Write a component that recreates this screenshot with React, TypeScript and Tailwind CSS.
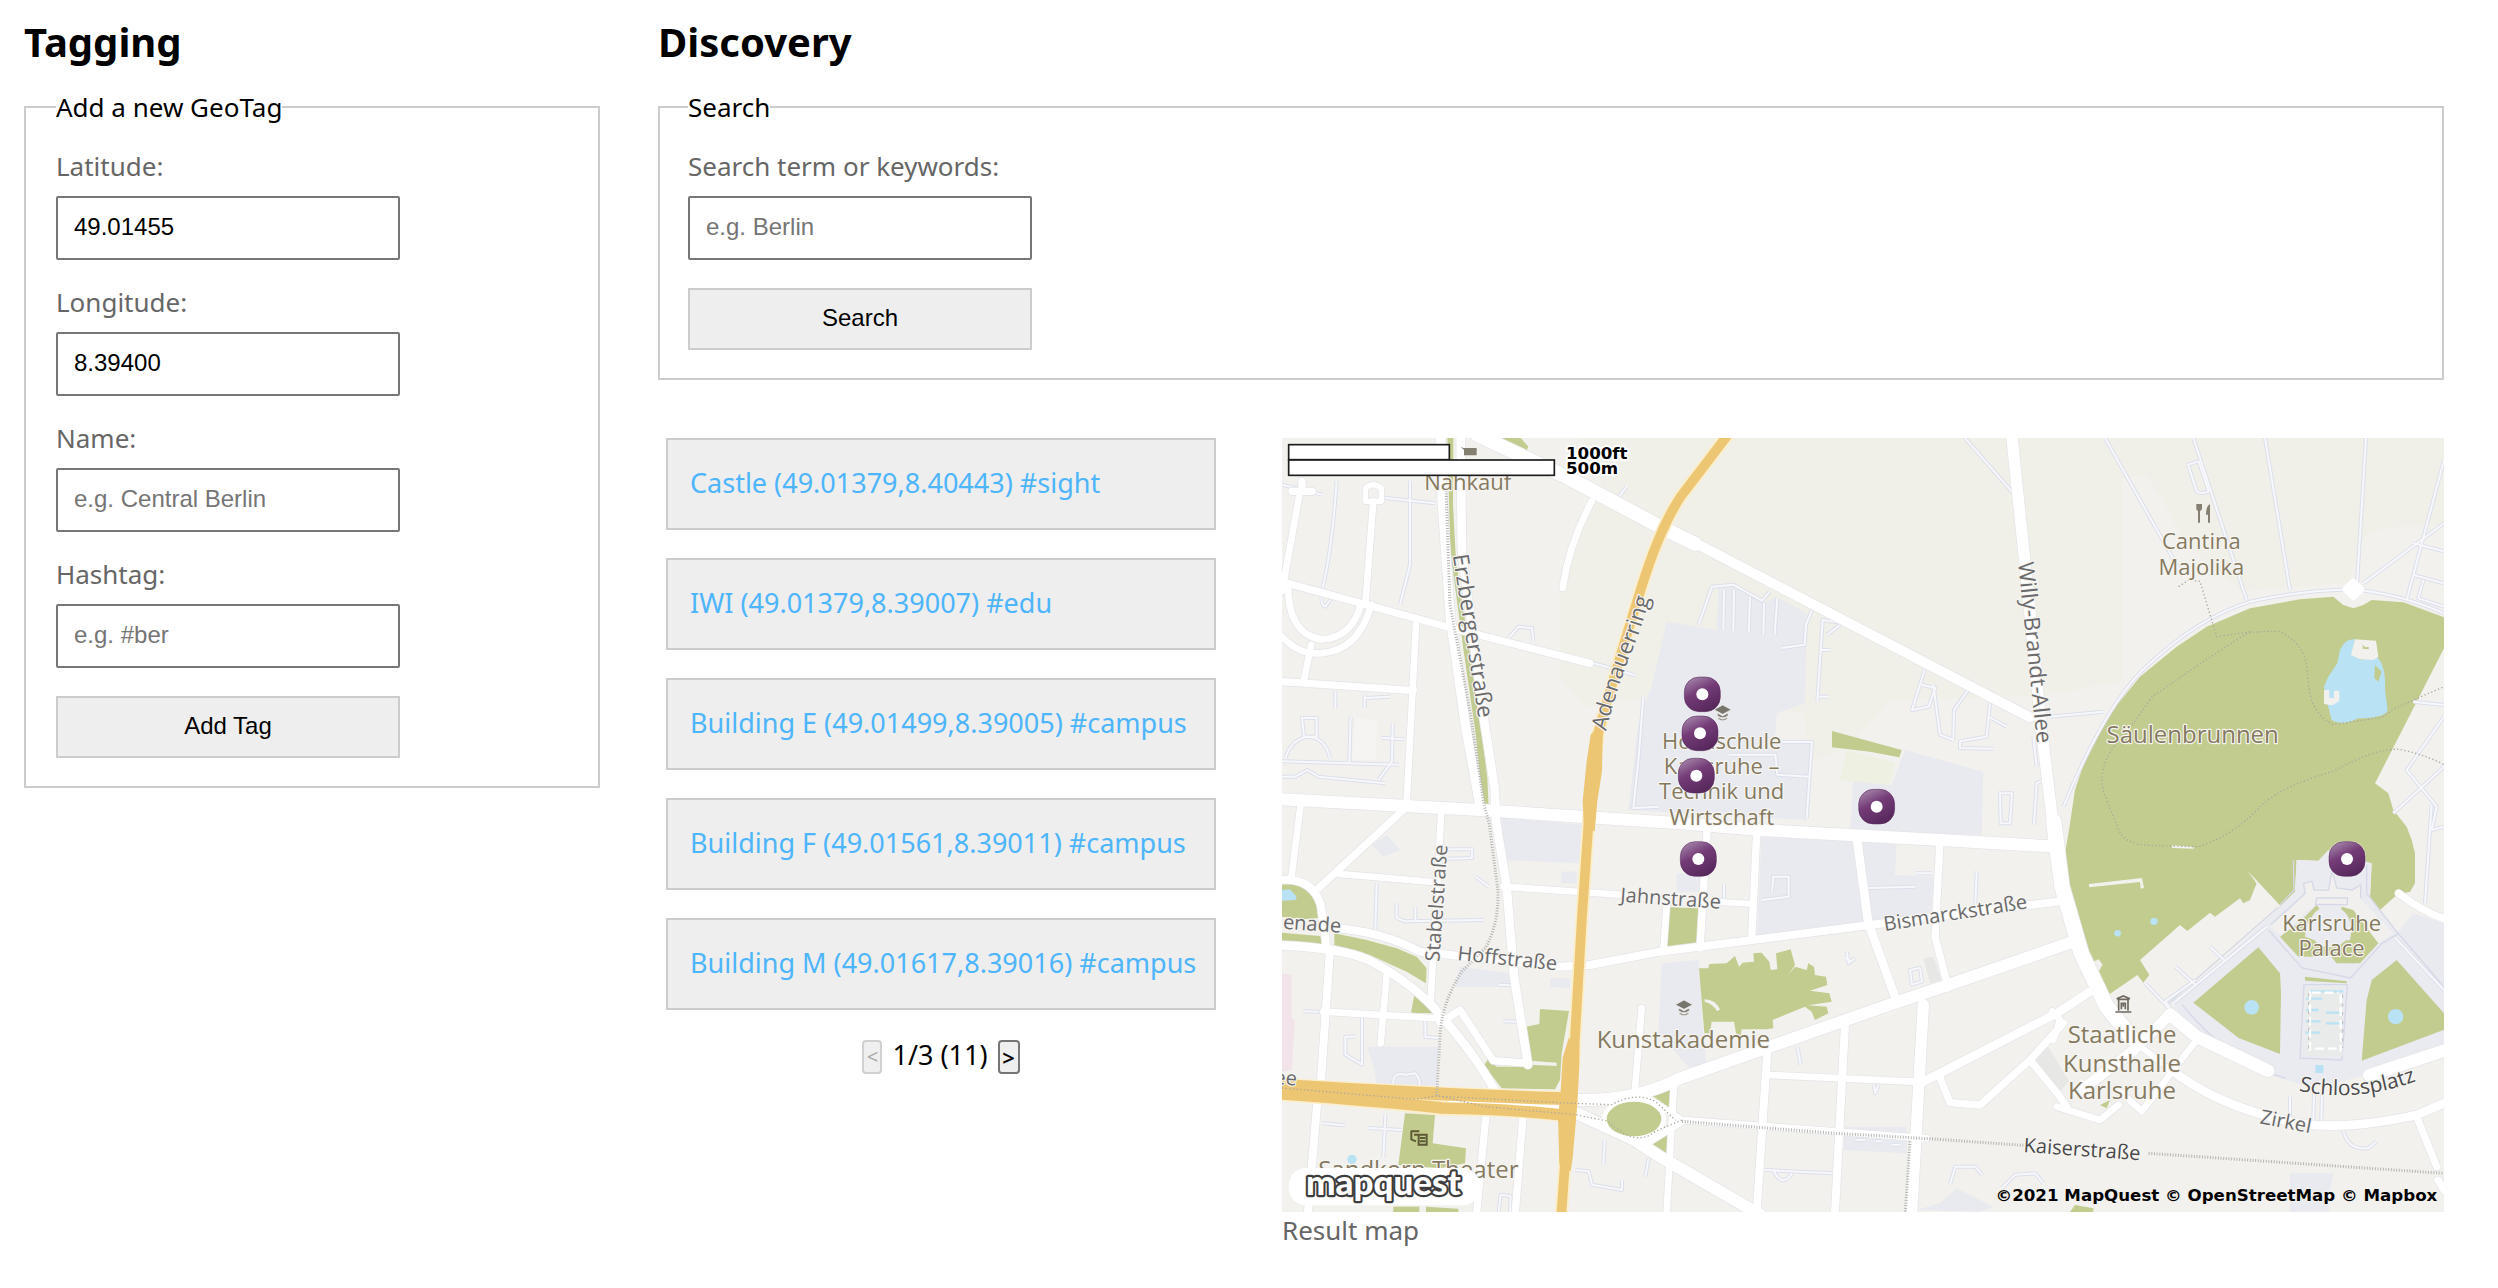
import type { ReactNode } from "react";

const results = [
  "Castle (49.01379,8.40443) #sight",
  "IWI (49.01379,8.39007) #edu",
  "Building E (49.01499,8.39005) #campus",
  "Building F (49.01561,8.39011) #campus",
  "Building M (49.01617,8.39016) #campus",
];

/* ---------- map data (three map units per CSS pixel) ---------- */

const blocks = [
  "1154,551 1304,576 1309,446 1354,436 1454,491 1484,476 1574,526 1569,796 1484,826 1479,906 1589,906 1574,1146 1039,1116 1069,856 1110,740",
  "1869,936 2104,1001 2099,1190 1704,1180 1714,1026 1829,1041",
  "1439,1191 1719,1201 1759,1461 1424,1496",
  "1739,1206 1844,1216 1839,1311 1954,1316 1949,1431 1764,1451",
  "620,1130 904,1161 894,1276 654,1266",
  "314,1191 354,1236 304,1256 269,1221",
  "839,1301 884,1301 884,1336 839,1336",
  "534,1586 684,1606 694,1646 519,1646",
  "804,1621 864,1621 864,1651 804,1646",
  "1139,1576 1249,1566 1264,1786 1274,1886 1219,1886 1129,1786",
  "254,1826 469,1826 464,1946 284,1936 274,1881",
  "1184,1306 1254,1306 1254,1361 1184,1361",
  "1689,2066 1874,2066 1874,2146 1684,2136",
  "2024,2251 2134,2306 2094,2322 1904,2316 1974,2296",
  "3394,1426 3486,1456 3486,1656 3344,1486",
  "3024,2206 3154,2206 3140,2290 3140,2322 3024,2322",
];

const greens = [
  "2361,1176 2379,1056 2419,936 2484,826 2574,716 2684,626 2774,566 2904,511 3054,484 3154,476 3184,501 3214,511 3244,501 3269,486 3364,493 3486,538 3486,631 3279,1036 3319,1066 3334,1116 3374,1166 3389,1206 3399,1246 3399,1336 3384,1361 3344,1371 3294,1416 3264,1376 3269,1276 3044,1266 3039,1361 2994,1406 2924,1336 2904,1386 2884,1396 2874,1381 2799,1436 2784,1424 2716,1479 2694,1461 2574,1566 2602,1611 2584,1634 2566,1611 2479,1671 2434,1576 2394,1476 2354,1326 2349,1246",
  "634,0 716,0 739,26 729,46",
  "496,0 514,0 513,200 522,370 560,620 594,846 616,1020 620,1106 604,1106 580,880 545,640 505,340",
  "0,1336 30,1334 70,1344 100,1380 110,1440 60,1444 0,1436",
  "0,1484 139,1496 144,1524 0,1508",
  "157,1486 254,1506 344,1531 404,1556 434,1591 432,1636 374,1601 264,1551 157,1521",
  "397,1671 459,1726 387,1724",
  "774,1713 861,1719 839,1846 834,1926 819,1954 659,1951 606,1881 619,1864 644,1886 739,1886 732,1766 772,1758",
  "369,2026 459,2031 452,2116 552,2131 549,2176 474,2191 349,2181",
  "334,2306 412,2306 412,2322 334,2322",
  "432,2306 529,2312 529,2322 432,2322",
  "1104,1968 1169,1949 1169,2014",
  "1092,2121 1162,2081 1157,2151",
  "1164,1408 1249,1411 1244,1521 1152,1531",
  "1251,1591 1279,1591 1282,1578 1334,1576 1359,1554 1371,1586 1382,1574 1416,1571 1414,1546 1439,1544 1462,1571 1466,1596 1486,1594 1482,1546 1526,1534 1539,1581 1519,1611 1539,1586 1574,1596 1579,1576 1596,1586 1599,1611 1632,1616 1636,1641 1584,1658 1642,1666 1649,1691 1578,1702 1634,1706 1639,1726 1599,1746 1589,1721 1569,1706 1472,1746 1474,1771 1452,1774 1379,1774 1374,1811 1362,1786 1356,1751 1289,1751 1284,1786 1267,1786",
  "1650,879 1859,936 1852,958 1764,941 1650,928",
  "2364,2322 2379,2301 2434,2311 2434,2322",
  "2454,2001 2484,1986 2474,2011",
];

const palaceGreens = [
  "2734,1694 2929,1528 2994,1606 2997,1666 2994,1848 2870,1800",
  "3269,1626 3344,1566 3486,1726 3486,1775 3239,1868 3254,1686",
  "2994,1496 3049,1456 3104,1401 3119,1421 3074,1456 3069,1496 3124,1516 3204,1506 3209,1476 3174,1436 3179,1406 3214,1416 3289,1516 3234,1576 3164,1576 3144,1551 3104,1556 3049,1556",
  "3069,1616 3194,1630 3194,1636 3069,1628",
];

const roads: [string, number][] = [
  ["M476,0 L480,180 505,540 550,860 596,1116", 28],
  ["M536,0 L540,350 574,600 605,840 638,1050 642,1150 674,1346 696,1616 738,1880", 26],
  ["M585,-10 L860,120 1134,266 1240,318", 42],
  ["M1200,296 L1264,328 2244,838", 30],
  ["M2189,-10 L2229,376 2274,836 2315,1176", 34],
  ["M2315,1150 L2340,1346 2398,1546 2474,1706 2550,1800", 46],
  ["M0,1084 L594,1116 1194,1156 1434,1176 1974,1206 2324,1226", 36],
  ["M54,160 L0,460", 20],
  ["M274,190 L250,500", 20],
  ["M250,190 L250,150 Q274,130 298,150 L298,190 Z", 16],
  ["M30,160 L90,160 M60,130 L60,160", 22],
  ["M0,431 L494,566 924,676", 22],
  ["M18,440 Q18,590 120,604 Q210,600 236,500", 20],
  ["M0,596 Q50,650 114,646 Q230,640 268,500", 20],
  ["M88,620 L66,726", 20],
  ["M0,731 L394,758", 22],
  ["M402,560 L374,1096", 20],
  ["M929,190 Q860,320 842,450", 20],
  ["M56,1100 L28,1320", 20],
  ["M370,1110 L110,1350", 22],
  ["M174,1308 L454,1332", 20],
  ["M0,1326 Q90,1320 116,1400 L134,1530 144,1536 116,1940", 24],
  ["M0,1522 Q180,1530 260,1566 Q400,1640 474,1730 Q580,1850 640,1960", 26],
  ["M154,1470 Q300,1480 414,1541 L830,1586 924,1581 1134,1541 1764,1461 2324,1391", 24],
  ["M478,1120 L446,1690", 20],
  ["M314,1610 L296,1816", 20],
  ["M124,1721 L470,1741", 20],
  ["M474,1756 L534,1716 634,1868 739,1876", 22],
  ["M106,1990 L78,2322", 24],
  ["M614,2010 L584,2322", 22],
  ["M724,2020 L700,2322", 22],
  ["M664,1346 L1030,1371", 20],
  ["M1154,1400 L1144,1540", 20],
  ["M1276,1166 L1254,1530", 22],
  ["M1300,1391 L1414,1398", 18],
  ["M1079,1711 L1059,1950", 20],
  ["M1424,1186 L1409,1500", 22],
  ["M1724,1196 L1759,1456 1844,1690", 26],
  ["M1974,1206 L1959,1496 1999,1650", 22],
  ["M884,1986 Q1060,1990 1194,1921 L1464,1826 1834,1696 1984,1646 2374,1511", 36],
  ["M1689,1760 L1659,2322", 24],
  ["M1456,1840 L1424,2322", 24],
  ["M1460,1911 L1894,1931", 20],
  ["M1924,1700 L1889,2322", 34],
  ["M1919,1934 L2324,1726 2424,1661", 26],
  ["M1969,1906 L2004,1994 2094,2001 2244,1866 2344,1756", 22],
  ["M2244,1866 L2334,1976 2354,2006", 22],
  ["M884,2026 L1054,2104 1134,2156 1434,2330", 36],
  ["M1074,1966 L1200,2046 1934,2101", 20],
  ["M1080,2124 L1200,2050", 22],
  ["M1176,1936 L1154,2322", 20],
  ["M2664,1730 L2544,1846 2390,1962", 32],
  ["M2664,1730 L2744,1796 2958,1898", 38],
  ["M2744,1806 L2674,1896 2580,2020 2500,1950", 20],
  ["M2660,1890 Q2800,2000 3004,2046 Q3154,2086 3404,2031 L3486,1996", 26],
  ["M3262,1912 L3486,1838", 38],
  ["M3404,2036 L3464,2186", 22],
  ["M3468,2226 L3486,2256", 22],
  ["M3350,1366 Q3420,1420 3486,1442", 22],
  ["M2314,1806 L2334,1746 2310,1720", 20],
  ["M2324,2006 L2454,2046 2510,2000", 20],
  ["M2564,1816 L2640,1876", 18],
];

const lanes = [
  "M2344,1106 Q2480,780 2604,676 Q2750,540 2904,491 Q3050,458 3214,454 Q3360,470 3486,526",
  "M2469,0 L2704,416",
  "M2734,0 L2894,486",
  "M2949,0 L3024,456",
  "M3252,0 L3224,456",
  "M3486,66 L3374,486",
  "M3244,436 L3486,256",
  "M3394,316 L3486,340",
  "M3394,411 L3486,436",
  "M3424,426 L3409,481 3486,506",
  "M2304,836 L2464,821",
  "M2049,0 L2194,166",
  "M3449,1100 L3429,1396",
  "M3449,1176 L3486,1166",
  "M3486,836 L3374,996 3464,1106 3449,1176",
  "M3486,986 L3334,1126",
  "M3394,791 L3486,801",
  "M2718,80 L2744,160 Q2760,170 2780,160 L2750,70 Z",
  "M1250,560 L1290,446 1354,440 1440,488 1464,460",
  "M1326,456 L1324,576 M1356,456 L1354,580 M1404,476 L1400,584 M1446,496 L1444,590 M1486,480 L1478,590",
  "M1590,516 L1572,560 1568,620 1500,630",
  "M1684,556 L1622,546 1606,790",
  "M1636,590 L1674,560",
  "M1618,636 L1646,636 M1610,776 L1640,776",
  "M1928,696 L1890,816 1940,806 1960,750 1918,740",
  "M1954,740 L1974,890 2014,906 M2058,756 L2016,816 2014,906",
  "M2124,796 L2114,896 2034,910 2034,930 2134,932 M2120,836 L2174,866",
  "M2254,896 L2264,986 M2284,1026 L2264,1036 2256,1160",
  "M2154,1066 L2190,1066 2184,1156 2156,1156 Z",
  "M1500,912 L1590,912 1574,1140 M1340,950 L1480,950 1486,1010 1580,1016",
  "M164,130 Q150,330 124,440 Q110,500 130,506 L150,480",
  "M384,130 L384,380 354,500",
  "M0,140 L120,170 M310,180 L460,196",
  "M680,600 L710,566 750,570 754,610",
  "M930,674 L1060,712",
  "M1000,190 L1034,146",
  "M1084,776 L1070,960 1054,1110 1130,1106",
  "M160,760 L160,810 M248,770 L248,810 M250,780 L324,776",
  "M60,840 L104,840 104,896 66,896 Z",
  "M10,960 Q30,900 80,896 Q130,900 144,960",
  "M0,970 L350,980 M0,1016 L40,1016 76,996 110,1016 310,1036",
  "M206,836 L202,976 M332,856 L330,970 290,1026 M300,900 L366,904",
  "M494,1234 L570,1234 570,1260 500,1262",
  "M284,1336 L280,1476",
  "M344,1396 L344,1440 370,1450 604,1446 M400,1406 L400,1450",
  "M580,1316 L620,1346",
  "M64,1720 L130,1722 M240,1740 L240,1880 190,1850 190,1796 220,1796",
  "M430,1746 L430,1796 470,1800",
  "M650,1640 L690,1642 M664,1750 L724,1752",
  "M334,1940 Q330,1900 370,1910 L400,1906 Q420,1930 410,1950",
  "M120,2056 L190,2062 M310,2030 L304,2160 M260,2070 L360,2076",
  "M880,2196 L920,2200 930,2240 1020,2256 1020,2226",
  "M968,2106 L964,2180 M1100,2160 L1090,2216",
  "M650,2322 L656,2270 686,2274 684,2322",
  "M1440,1386 L1520,1376 1520,1316 1474,1316 1470,1360",
  "M1760,1350 L1900,1346 M1900,1306 L1950,1306",
  "M2084,1300 L2080,1396 M1326,1340 L1326,1380",
  "M1884,1596 L1914,1590 1920,1630 1890,1640 Z",
  "M1694,1540 L1700,1576 1720,1560 M1690,1560 L1710,1570",
  "M1546,1826 L1556,1880 M1776,1940 L1780,1966 1790,1940",
  "M1450,2196 L1650,2206 M1476,2200 Q1500,2250 1530,2206",
  "M1720,2106 L1750,2106 M1780,2110 L1800,2110 M1830,2120 L1854,2120",
  "M2004,2240 L2020,2186 2080,2186 2100,2210",
  "M2160,2250 L2200,2210 2260,2206 2284,2236",
  "M3184,2080 Q3200,2140 3260,2130 L3284,2110",
  "M3096,1966 L3094,2050 M3120,1966 L3118,2050 M3024,1976 L3024,2040",
  "M2590,1636 L2660,1710 M2680,1586 L2740,1640 M2784,1526 L2830,1570",
  "M2740,1626 L2650,1690 2670,1716",
  "M2674,1696 L2954,1466 M3340,1500 L3486,1656",
];

const plazaLines = [
  "M2700,1700 Q2850,1880 3010,1920",
  "M3034,1266 L3036,1356 2986,1410 2660,1696",
  "M2960,1476 L3060,1590 3206,1620 3300,1516 3350,1486",
  "M3254,1280 L3254,1366 3340,1476 3486,1646",
  "M3064,1336 L3090,1330 3096,1356 3140,1356 3150,1296 3164,1350 3210,1356 3236,1340 3236,1380",
  "M3064,1336 L3070,1366 2966,1460",
  "M3104,1380 L3196,1380 3196,1400 3100,1400 Z",
  "M3066,1640 L3054,1860 3180,1866 3196,1640 Z",
];

const dotted = [
  "M2690,446 L2720,426 2754,430 2804,596 Q2900,580 2990,580 Q3060,610 3074,680 Q3080,760 3090,790 Q3110,840 3154,860 L3300,838 3340,810 3486,746",
  "M2904,580 L2750,680 2610,776 Q2540,880 2500,920 Q2440,1000 2470,1076 L2510,1176 Q2530,1220 2600,1222 L2750,1226 Q2860,1190 2940,1100 Q3010,1040 3154,1000 Q3280,930 3350,934 Q3420,946 3486,980",
  "M0,1950 L400,1984 460,1974 870,1996 990,2000 Q1060,1960 1120,1990 L1180,2046",
  "M470,1974 L610,2006 880,2030 980,2050 Q1060,2130 1120,2080 L1200,2046",
];

const rails = [
  "M492,150 L504,500 566,830 606,1100 622,1160 648,1360 Q650,1460 610,1530 L540,1600 Q476,1700 474,1800 L464,1976",
  "M1200,2050 L1660,2086 1940,2102 2224,2122",
  "M2600,2146 L3486,2206",
  "M1884,2110 L1870,2322",
];

type LabelProps = {
  x: number;
  y: number;
  size?: number;
  turn?: number;
  fill?: string;
  anchor?: "start" | "middle" | "end";
  children: ReactNode;
};

function MapLabel({ x, y, size = 66, turn = 0, fill = "#857a60", anchor = "middle", children }: LabelProps) {
  return (
    <text
      x={x}
      y={y}
      fontSize={size}
      fill={fill}
      textAnchor={anchor}
      stroke="#f6f5f1"
      strokeWidth="7"
      strokeLinejoin="round"
      paintOrder="stroke"
      transform={`rotate(${turn} ${x} ${y})`}
    >
      {children}
    </text>
  );
}

const streetGrey = "#6a6a6c";

function GradCap({ x, y }: { x: number; y: number }) {
  return (
    <g transform={`translate(${x} ${y})`} fill="#77756c" stroke="#f6f5f1" strokeWidth="2">
      <path d="M0,-20 L26,-6 0,8 -26,-6 Z" />
      <path d="M-16,4 L0,13 16,4 V12 Q0,24 -16,12 Z" />
      <path d="M-14,17 Q0,28 14,17 V22 Q0,32 -14,22 Z" />
    </g>
  );
}

const pins = [
  [1261, 769],
  [1254, 886],
  [1243, 1013],
  [1784, 1106],
  [1249, 1263],
  [3195, 1263],
];

function ResultMap() {
  return (
    <svg
      viewBox="0 0 3486 2322"
      role="img"
      aria-label="Map of Karlsruhe with six tagged places"
      className="block h-auto w-full font-['Open_Sans','Noto_Sans',sans-serif] font-medium"
    >
      <defs>
        <linearGradient id="pin" x1="0.1" y1="0" x2="0.6" y2="1">
          <stop offset="0" stopColor="#a98fae" />
          <stop offset="0.45" stopColor="#753c78" />
          <stop offset="1" stopColor="#57285c" />
        </linearGradient>
        <path id="schlossplatz" d="M3050,1958 Q3240,2000 3440,1914" />
        <path id="adenauerring" d="M972,880 Q1010,730 1066,600 Q1090,530 1112,450" />
      </defs>

      <rect width="3486" height="2322" fill="#f2f1ed" />
      <path
        d="M900,0 L960,150 880,300 834,456 834,720 914,806 1100,776 1569,826 1574,976 1700,926 1824,786 2264,776 2522,730 2522,120 2590,110 2650,200 2700,300 2800,400 2880,460 3200,435 3240,300 3300,270 3486,260 V0 Z"
        fill="#f0f0e8"
      />
      <g fill="#e8eaef">
        {blocks.map((p) => (
          <polygon key={p} points={p} />
        ))}
      </g>
      <polygon points="0,1606 29,1611 29,1741 39,1746 29,1896 0,1901" fill="#f2e2ea" />
      <polygon points="2299,1826 2360,1930 2334,1960 2255,1860" fill="#e7e7e6" />
      <polygon points="1924,1561 1954,1556 1979,1626 1944,1636" fill="#e7e7e6" />
      <polygon points="1694,936 1839,976 1824,1041 1674,1026" fill="#eef0e2" />
      <polygon points="220,840 286,846 280,966 210,966" fill="#f5f4f2" />
      <g fill="#c2cc8e">
        {greens.map((p) => (
          <polygon key={p} points={p} />
        ))}
      </g>

      <path
        d="M3044,1266 L3109,1268 3139,1236 3269,1276 3264,1376 3344,1486 3486,1656 V1820 Q3254,1925 3090,1946 Q2850,1900 2674,1706 L2994,1406 3039,1361 Z"
        fill="#eaebf1"
      />
      <polygon
        points="3069,1331 3089,1331 3094,1351 3139,1351 3154,1296 3164,1351 3219,1356 3239,1341 3234,1381 3334,1486 3289,1516 3174,1396 3104,1396 2994,1491 2964,1466 3069,1371"
        fill="#f1f0ee"
      />
      <g fill="#c2cc8e">
        {palaceGreens.map((p) => (
          <polygon key={p} points={p} />
        ))}
      </g>
      <g fill="none" stroke="#d5d8e6" strokeWidth="4">
        {plazaLines.map((d) => (
          <path key={d} d={d} />
        ))}
      </g>
      <circle cx="3144" cy="1466" r="62" fill="#eaebf1" />
      <rect x="3070" y="1648" width="112" height="206" fill="#e9eaea" />
      <g fill="none" strokeWidth="7">
        <path d="M3084,1660 H3184 M3072,1682 H3120 M3072,1716 H3110 M3132,1724 H3180 M3072,1750 H3115 M3132,1756 H3184 M3070,1784 H3114" stroke="#b9e2f4" />
        <path d="M3084,1660 V1840 M3176,1670 V1840 M3100,1832 H3170 M3090,1664 H3170" stroke="#fff" strokeDasharray="26 12" />
        <path d="M3080,1666 V1846 M3182,1670 V1830" stroke="#bbb" strokeWidth="3" strokeDasharray="10 16" />
      </g>

      <g fill="#b9e2f4">
        <path d="M3174,636 Q3190,600 3219,604 L3209,651 3239,666 3284,656 Q3312,680 3309,756 L3317,816 Q3310,840 3229,841 Q3180,866 3149,846 L3136,796 3126,746 3139,716 3166,676 Z" />
        <circle cx="2909" cy="1708" r="22" />
        <circle cx="3341" cy="1736" r="23" />
        <circle cx="2507" cy="1486" r="10" />
        <circle cx="2616" cy="1450" r="11" />
        <rect x="3100" y="1881" width="24" height="24" />
        <path d="M0,1356 L24,1354 44,1376 40,1386 0,1388 Z" />
        <circle cx="210" cy="2164" r="14" />
      </g>
      <g fill="#f2f1ed">
        <polygon points="3219,604 3282,608 3289,656 3274,666 3234,664 3207,651" />
        <path d="M3126,756 H3142 V780 H3156 V758 H3172 V790 L3150,802 3126,798 Z" />
        <path d="M2420,1338 L2580,1320 2586,1350 2576,1352 2574,1332 2422,1348 Z" />
        <path d="M2670,1222 L2735,1226 2735,1232 2670,1230 Z" />
        <path d="M1268,1684 Q1300,1684 1314,1714 L1306,1720 Q1290,1696 1268,1692 Z" />
        <path d="M2898,1300 L2996,1404 2982,1410 2926,1340 Z" />
        <path d="M2424,1576 L2450,1564 2462,1580 2450,1600 2434,1600 Z" />
        <path d="M744,1868 L824,1874 V1884 L744,1880 Z" />
      </g>
      <path d="M3279,681 L3299,701 3289,731 3277,721 Z M3242,620 L3250,628 3260,626 3260,634 3242,632 Z" fill="#c2cc8e" />

      <g fill="none" strokeLinejoin="round">
        {lanes.map((d) => (
          <path key={d} d={d} stroke="#dcdfec" strokeWidth="12" />
        ))}
        {lanes.map((d) => (
          <path key={d} d={d} stroke="#f8f8fb" strokeWidth="6" />
        ))}
        {roads.map(([d, w]) => (
          <path key={d} d={d} stroke="#e4e4e8" strokeWidth={w + 4} strokeLinecap="round" />
        ))}
        {roads.map(([d, w]) => (
          <path key={d} d={d} stroke="#fff" strokeWidth={w} strokeLinecap="round" />
        ))}
      </g>
      <rect x="3188" y="428" width="52" height="52" rx="12" fill="#fff" transform="rotate(45 3214 454)" />
      <ellipse cx="1056" cy="2043" rx="96" ry="66" fill="#fff" />
      <ellipse cx="1056" cy="2043" rx="82" ry="52" fill="#c2cc8e" />

      <g fill="none" strokeLinejoin="round">
        <path d="M1338,-10 L1196,176 Q1134,270 1079,446 Q1000,700 950,880 L934,1000 920,1150 899,1450 876,1850 858,2050 838,2330" stroke="#fbeecb" strokeWidth="40" />
        <path d="M0,1942 Q450,1970 850,1982" stroke="#fbeecb" strokeWidth="46" />
        <path d="M0,1968 Q300,1990 480,2012 Q700,2010 850,2032" stroke="#fbeecb" strokeWidth="44" />
        <path d="M500,1992 L840,2006" stroke="#fff" strokeWidth="14" />
        <path d="M1338,-10 L1196,176 Q1134,270 1079,446 Q1000,700 950,880 L934,1000 920,1150 899,1450 876,1850 858,2050 838,2330" stroke="#edc673" strokeWidth="29" />
        <path d="M0,1942 Q450,1970 850,1982" stroke="#edc673" strokeWidth="38" />
        <path d="M0,1968 Q300,1990 480,2010 Q700,2014 850,2032" stroke="#edc673" strokeWidth="34" />
      </g>
      <polygon points="945,870 962,900 960,1000 946,1090 938,1180 906,1170 902,1090 914,970 926,890" fill="#edc673" />
      <polygon points="860,1800 892,1820 892,1880 886,2000 872,2160 866,2200 832,2180 828,2040 836,1960 842,1860" fill="#edc673" />

      <g fill="none">
        {dotted.map((d) => (
          <path key={d} d={d} stroke="#aaa99c" strokeWidth="4" strokeDasharray="4 7" />
        ))}
        {rails.map((d) => (
          <path key={d} d={d} stroke="#b4b4b2" strokeWidth="9" strokeDasharray="3 5" />
        ))}
      </g>

      {/* points of interest */}
      <GradCap x={1322} y={821} />
      <GradCap x={1206} y={1706} />
      <g fill="#857f72">
        <path d="M536,26 L544,30 H584 V52 H546 V36 Z" />
        <path d="M2743,198 H2760 V214 L2754,220 V254 H2748 V220 L2743,214 Z M2784,198 V254 H2778 V230 H2772 Q2772,204 2784,198 Z" />
      </g>
      <g fill="none" stroke="#6f6a60" strokeWidth="5">
        <path d="M2506,1684 H2542 M2510,1684 V1718 M2538,1684 V1718 M2500,1722 H2548 M2504,1682 L2524,1674 2544,1682 M2518,1714 V1696 H2530 V1714 M2524,1696 V1706" />
      </g>
      <g fill="none" stroke="#5e5a35" strokeWidth="6">
        <path d="M386,2080 H412 M388,2080 V2104 L402,2110 M396,2090 H408 M410,2090 H434 V2120 H410 Z M414,2100 H430 M414,2110 H430" />
      </g>

      <MapLabel x={557} y={156}>Nahkauf</MapLabel>
      <MapLabel x={2758} y={334}>Cantina</MapLabel>
      <MapLabel x={2758} y={411}>Majolika</MapLabel>
      <MapLabel x={2732} y={916} size={72}>Säulenbrunnen</MapLabel>
      <MapLabel x={1319} y={933}>Hochschule</MapLabel>
      <MapLabel x={1319} y={1008}>Karlsruhe –</MapLabel>
      <MapLabel x={1319} y={1084}>Technik und</MapLabel>
      <MapLabel x={1319} y={1161}>Wirtschaft</MapLabel>
      <MapLabel x={1204} y={1831} size={72}>Kunstakademie</MapLabel>
      <MapLabel x={3149} y={1479}>Karlsruhe</MapLabel>
      <MapLabel x={3149} y={1555}>Palace</MapLabel>
      <MapLabel x={2520} y={1816} size={72}>Staatliche</MapLabel>
      <MapLabel x={2520} y={1901} size={72}>Kunsthalle</MapLabel>
      <MapLabel x={2520} y={1984} size={72}>Karlsruhe</MapLabel>
      <MapLabel x={409} y={2219} size={72}>Sandkorn Theater</MapLabel>

      {/* streets */}
      <MapLabel x={512} y={352} turn={81} anchor="start" fill={streetGrey}>Erzbergerstraße</MapLabel>
      <MapLabel x={2208} y={374} turn={84} anchor="start" fill={streetGrey}>Willy-Brandt-Allee</MapLabel>
      <MapLabel x={472} y={1572} turn={-86} anchor="start" size={60} fill={streetGrey}>Stabelstraße</MapLabel>
      <MapLabel x={525} y={1566} turn={6} anchor="start" size={60} fill={streetGrey}>Hoffstraße</MapLabel>
      <MapLabel x={1014} y={1391} turn={4} anchor="start" size={60} fill={streetGrey}>Jahnstraße</MapLabel>
      <MapLabel x={1808} y={1479} turn={-9} anchor="start" size={60} fill={streetGrey}>Bismarckstraße</MapLabel>
      <MapLabel x={2} y={1472} turn={4} anchor="start" size={60} fill={streetGrey}>enade</MapLabel>
      <MapLabel x={-24} y={1938} turn={4} anchor="start" size={60} fill={streetGrey}>ee</MapLabel>
      <MapLabel x={2224} y={2142} turn={4} anchor="start" size={60} fill="#4a4a4c">Kaiserstraße</MapLabel>
      <MapLabel x={2932} y={2056} turn={11} anchor="start" size={60} fill={streetGrey}>Zirkel</MapLabel>
      <g stroke="#f6f5f1" strokeWidth="7" strokeLinejoin="round" paintOrder="stroke">
        <text fontSize="63" fill="#4a4a4c">
          <textPath href="#schlossplatz">Schlossplatz</textPath>
        </text>
        <text fontSize="66" fill={streetGrey}>
          <textPath href="#adenauerring">Adenauerring</textPath>
        </text>
      </g>

      {pins.map(([x, y]) => (
        <g key={`${x}-${y}`}>
          <rect x={x - 57} y={y - 54} width="114" height="108" rx="46" fill="#fff" opacity="0.45" />
          <rect x={x - 54} y={y - 52} width="108" height="104" rx="44" fill="url(#pin)" stroke="#56285b" strokeOpacity="0.55" strokeWidth="3" />
          <circle cx={x} cy={y} r="18" fill="#fff" />
        </g>
      ))}

      {/* scale bar */}
      <g fill="#fff" stroke="#1c1c1c" strokeWidth="5">
        <rect x="20" y="20" width="482" height="45" />
        <rect x="20" y="66" width="797" height="46" />
      </g>
      <g
        className="font-['DejaVu_Sans',sans-serif] font-bold"
        fontSize="50"
        fill="#000"
        stroke="#fff"
        strokeWidth="12"
        strokeLinejoin="round"
        paintOrder="stroke"
      >
        <text x="852" y="63">1000ft</text>
        <text x="852" y="109">500m</text>
        <text x="3466" y="2289" textAnchor="end" strokeWidth="6" stroke="#f2f1ed">
          ©2021 MapQuest © OpenStreetMap © Mapbox
        </text>
      </g>

      {/* provider mark */}
      <rect x="20" y="2190" width="574" height="112" rx="52" fill="#fff" />
      <text
        x="304"
        y="2272"
        textAnchor="middle"
        fontSize="105"
        fill="#fff"
        stroke="#3d3d3d"
        strokeWidth="13"
        strokeLinejoin="round"
        paintOrder="stroke"
        className="font-['Lato',sans-serif] font-black"
      >
        mapquest
      </text>
    </svg>
  );
}

/* ---------- form parts ---------- */

function Field({ id, label, value, placeholder }: { id: string; label: string; value?: string; placeholder?: string }) {
  return (
    <div className="flex max-w-[344px] flex-col gap-3">
      <label htmlFor={id} className="text-[#666]">
        {label}
      </label>
      <input
        id={id}
        type="text"
        defaultValue={value}
        placeholder={placeholder}
        className="h-16 w-full rounded-xs border-2 border-[#767676] bg-white px-4 pb-0.5 font-['Liberation_Sans',sans-serif] text-[24px] text-black placeholder:text-[#757575]"
      />
    </div>
  );
}

function SubmitButton({ children }: { children: ReactNode }) {
  return (
    <button
      type="submit"
      className="mt-7 h-[62px] w-full max-w-[344px] border-2 border-[#ccc] bg-[#eee] pb-0.5 font-['Liberation_Sans',sans-serif] text-[24px] text-black"
    >
      {children}
    </button>
  );
}

export default function App() {
  return (
    <div className="grid grid-cols-[minmax(0,576fr)_minmax(0,1786fr)] items-start gap-[58px] bg-white pt-[18px] pr-[54px] pb-6 pl-6 font-['Noto_Sans',sans-serif] text-[26px] leading-9 text-black">
      <section>
        <h1 className="mb-[23px] text-[40px] leading-12 font-bold">Tagging</h1>
        <form onSubmit={(e) => e.preventDefault()}>
          <fieldset className="border-2 border-[#ccc] px-[30px] pb-7">
            <legend>Add a new GeoTag</legend>
            <div className="flex flex-col gap-6 pt-[23px]">
              <Field id="latitude" label="Latitude:" value="49.01455" />
              <Field id="longitude" label="Longitude:" value="8.39400" />
              <Field id="name" label="Name:" placeholder="e.g. Central Berlin" />
              <Field id="hashtag" label="Hashtag:" placeholder="e.g. #ber" />
            </div>
            <SubmitButton>Add Tag</SubmitButton>
          </fieldset>
        </form>
      </section>

      <section>
        <h1 className="mb-[23px] text-[40px] leading-12 font-bold">Discovery</h1>
        <form onSubmit={(e) => e.preventDefault()}>
          <fieldset className="border-2 border-[#ccc] px-7 pb-7">
            <legend>Search</legend>
            <div className="pt-[23px]">
              <Field id="search" label="Search term or keywords:" placeholder="e.g. Berlin" />
            </div>
            <SubmitButton>Search</SubmitButton>
          </fieldset>
        </form>

        <div className="mt-[58px] grid grid-cols-[minmax(0,550fr)_minmax(0,1162fr)] items-start gap-[66px] pl-2">
          <div>
            <ul className="flex flex-col gap-7 text-[27px]">
              {results.map((item) => (
                <li key={item} className="flex h-[92px] items-center border-2 border-[#ccc] bg-[#eee] pr-4 pb-0.5 pl-[22px] whitespace-nowrap text-[#4db5fb]">
                  {item}
                </li>
              ))}
            </ul>
            <nav aria-label="Result pages" className="mt-[30px] flex items-center justify-center gap-2.5 text-[27px] leading-[30px]">
              <button type="button" disabled aria-label="Previous page" className="flex h-[34px] w-5 items-center justify-center rounded-sm border-2 border-[#d0d0d0] bg-[#efefef] text-[20px] text-[#aaa]">
                &lt;
              </button>
              <span className="pb-1">1/3 (11)</span>
              <button type="button" aria-label="Next page" className="flex h-[34px] w-[22px] items-center justify-center rounded-sm border-2 border-[#767676] bg-[#efefef] text-[22px] font-semibold text-black">
                &gt;
              </button>
            </nav>
          </div>
          <figure>
            <ResultMap />
            <figcaption className="text-[#666]">Result map</figcaption>
          </figure>
        </div>
      </section>
    </div>
  );
}
